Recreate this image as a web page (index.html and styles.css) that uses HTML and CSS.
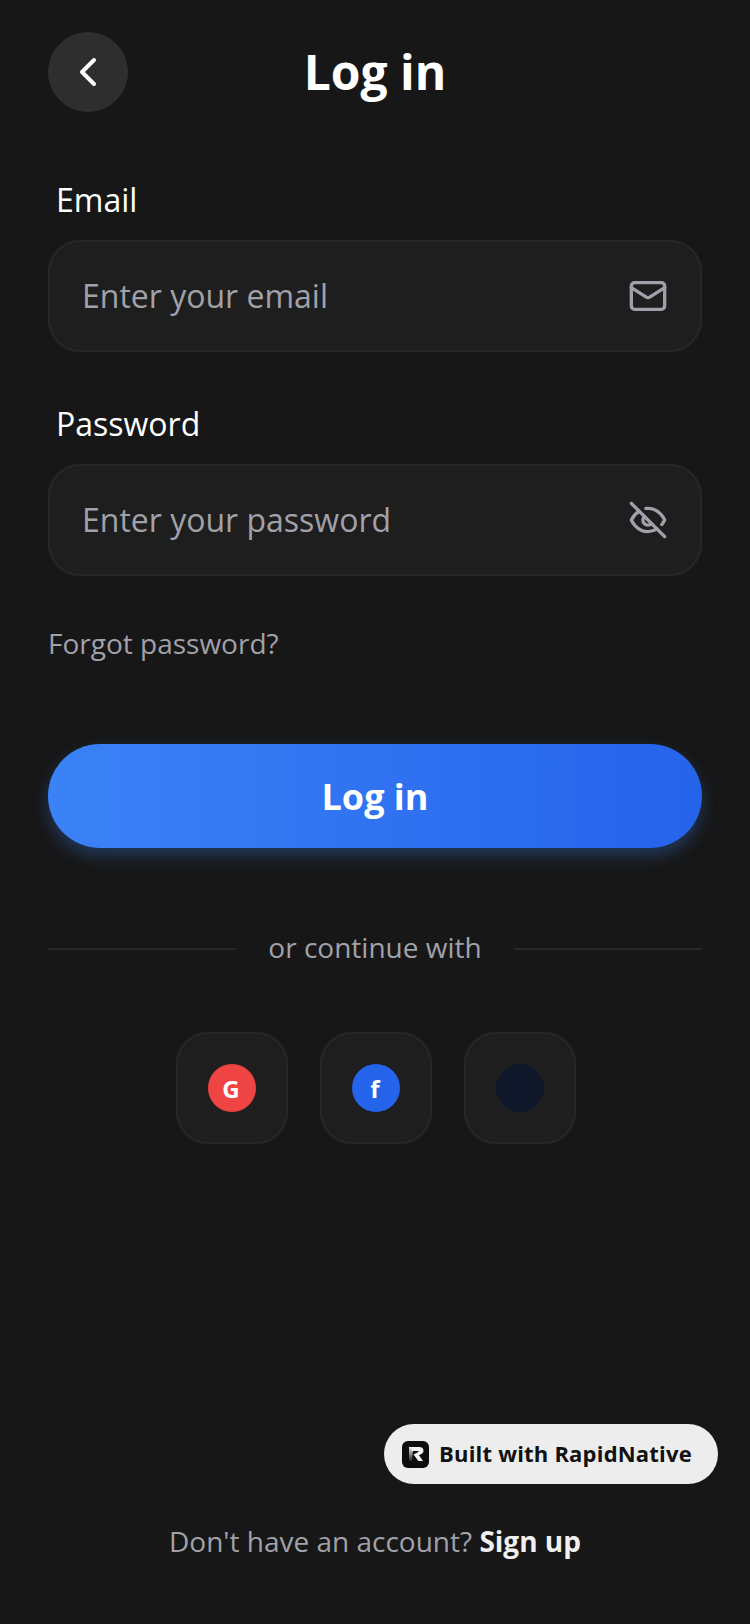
FILE: index.html
```html
<!DOCTYPE html>
<html lang="en">
<head>
    <meta charset="UTF-8">
    <meta name="viewport" content="width=device-width, initial-scale=1.0">
    <title>Log in</title>
    <link rel="stylesheet" href="styles.css">
</head>
<body>
    <div class="screen">
        <header class="top-bar">
            <button type="button" class="back-button" aria-label="Back">
                <svg class="back-icon" viewBox="0 0 24 24" fill="none" stroke="currentColor" stroke-width="2" stroke-linecap="round" stroke-linejoin="round">
                    <path d="m15 18-6-6 6-6"/>
                </svg>
            </button>
            <h1>Log in</h1>
        </header>

        <form class="login-form">
            <div class="form-group">
                <label for="email">Email</label>
                <div class="input-box">
                    <input type="text" id="email" placeholder="Enter your email">
                    <svg class="input-icon" viewBox="0 0 24 24" fill="none" stroke="currentColor" stroke-width="2" stroke-linecap="round" stroke-linejoin="round">
                        <rect x="2" y="4" width="20" height="16" rx="2"/>
                        <path d="m22 7-8.97 5.7a1.94 1.94 0 0 1-2.06 0L2 7"/>
                    </svg>
                </div>
            </div>

            <div class="form-group">
                <label for="password">Password</label>
                <div class="input-box">
                    <input type="text" id="password" placeholder="Enter your password">
                    <svg class="input-icon" viewBox="0 0 24 24" fill="none" stroke="currentColor" stroke-width="2" stroke-linecap="round" stroke-linejoin="round">
                        <path d="M9.88 9.88a3 3 0 1 0 4.24 4.24"/>
                        <path d="M10.73 5.08A10.43 10.43 0 0 1 12 5c7 0 10 7 10 7a13.16 13.16 0 0 1-1.67 2.68"/>
                        <path d="M6.61 6.61A13.526 13.526 0 0 0 2 12s3 7 10 7a9.74 9.74 0 0 0 5.39-1.61"/>
                        <line x1="2" y1="2" x2="22" y2="22"/>
                    </svg>
                </div>
            </div>

            <a class="forgot-link" href="#">Forgot password?</a>

            <button type="submit" class="login-button">Log in</button>
        </form>

        <div class="divider">
            <span class="divider-line"></span>
            <span class="divider-text">or continue with</span>
            <span class="divider-line"></span>
        </div>

        <div class="social-row">
            <button type="button" class="social-button"><span class="social-dot google">G</span></button>
            <button type="button" class="social-button"><span class="social-dot facebook">f</span></button>
            <button type="button" class="social-button"><span class="social-dot apple"></span></button>
        </div>

        <p class="signup">Don't have an account? <a href="#">Sign up</a></p>
    </div>

    <div class="built-badge">
        <svg class="badge-logo" viewBox="0 0 27 27">
            <defs>
                <linearGradient id="stem-fade" x1="0" y1="0" x2="0" y2="1">
                    <stop offset="0" stop-color="#f2f2f2"/>
                    <stop offset="1" stop-color="#f2f2f2" stop-opacity="0.1"/>
                </linearGradient>
            </defs>
            <rect width="27" height="27" rx="6" fill="#0d0d0d"/>
            <path d="M7 6h6v3h-2l-1 11H7z" fill="url(#stem-fade)"/>
            <path d="M10 6h8a3.6 3.6 0 0 1 1.8 6.7L17 14.2l4 5.8h-4.6l-4.9-6.4 4.8-2.6c.5-.3.3-1-.3-1H10z" fill="#f2f2f2"/>
        </svg>
        <span class="badge-text">Built with RapidNative</span>
    </div>
</body>
</html>
```

FILE: styles.css
```css
* {
    box-sizing: border-box;
}
html, body {
    margin: 0;
    height: 100%;
}
body {
    font-family: 'Open Sans', 'Noto Sans', sans-serif;
    color: #fff;
    background-color: #171717;
}
button {
    font-family: inherit;
}
.screen {
    position: relative;
    display: flex;
    flex-direction: column;
    min-height: 1624px;
    padding: 32px 48px 0;
}
.top-bar {
    position: relative;
    display: flex;
    align-items: center;
    justify-content: center;
    height: 80px;
}
.top-bar h1 {
    margin: 0;
    font-size: 48px;
    line-height: 80px;
    font-weight: 700;
}
.back-button {
    position: absolute;
    left: 0;
    top: 0;
    display: flex;
    align-items: center;
    justify-content: center;
    width: 80px;
    height: 80px;
    padding: 0;
    border: none;
    border-radius: 50%;
    color: #fff;
    background-color: #2e2e2e;
}
.back-icon {
    width: 48px;
    height: 48px;
}
.login-form {
    display: flex;
    flex-direction: column;
    margin-top: 64px;
}
.form-group {
    margin-bottom: 48px;
}
.form-group label {
    display: block;
    margin: 0 0 16px 8px;
    font-size: 32px;
    line-height: 48px;
}
.input-box {
    display: flex;
    align-items: center;
    height: 112px;
    padding: 0 32px;
    border: 2px solid #272727;
    border-radius: 32px;
    background-color: #1e1e1e;
}
.input-box input {
    flex: 1;
    min-width: 0;
    padding: 0 0 2px;
    border: none;
    outline: none;
    font-family: inherit;
    font-size: 32px;
    color: #fff;
    background: transparent;
}
.input-box input::placeholder {
    color: #a1a1aa;
    opacity: 1;
}
.input-icon {
    width: 40px;
    height: 40px;
    color: #a1a1aa;
}
.forgot-link {
    font-size: 28px;
    line-height: 38px;
    color: #a1a1aa;
    text-decoration: none;
}
.login-button {
    height: 104px;
    margin-top: 82px;
    padding: 0;
    border: none;
    border-radius: 52px;
    font-size: 36px;
    font-weight: 700;
    color: #fff;
    background: linear-gradient(90deg, #3b82f6, #2563eb);
    box-shadow: 0 8px 16px rgba(59, 130, 246, 0.3);
}
.divider {
    display: flex;
    align-items: center;
    gap: 32px;
    margin-top: 80px;
}
.divider-line {
    flex: 1;
    height: 2px;
    background-color: #272727;
}
.divider-text {
    padding-bottom: 4px;
    font-size: 28px;
    line-height: 38px;
    color: #a1a1aa;
}
.social-row {
    display: flex;
    justify-content: center;
    gap: 32px;
    margin-top: 62px;
    padding-left: 2px;
}
.social-button {
    display: flex;
    align-items: center;
    justify-content: center;
    width: 112px;
    height: 112px;
    padding: 0;
    border: 2px solid #272727;
    border-radius: 32px;
    background-color: #1e1e1e;
}
.social-dot {
    display: flex;
    align-items: center;
    justify-content: center;
    width: 48px;
    height: 48px;
    padding-right: 2px;
    border-radius: 50%;
    font-size: 24px;
    font-weight: 700;
    color: #fff;
}
.google {
    background-color: #ef4444;
}
.facebook {
    background-color: #2563eb;
}
.apple {
    background-color: #0f172a;
}
.signup {
    margin: auto 0 63px;
    text-align: center;
    font-size: 28px;
    line-height: 40px;
    color: #a1a1aa;
}
.signup a {
    font-weight: 700;
    color: #f0f0f0;
    text-decoration: none;
}
.built-badge {
    position: absolute;
    left: 384px;
    top: 1424px;
    display: flex;
    align-items: center;
    gap: 10px;
    width: 334px;
    height: 60px;
    padding: 0 18px;
    border-radius: 30px;
    color: #111;
    background-color: #ededed;
}
.badge-text {
    padding-bottom: 2px;
    font-size: 22px;
    font-weight: 700;
    letter-spacing: 0.2px;
    white-space: nowrap;
}
.badge-logo {
    width: 27px;
    height: 27px;
    flex-shrink: 0;
}
```
